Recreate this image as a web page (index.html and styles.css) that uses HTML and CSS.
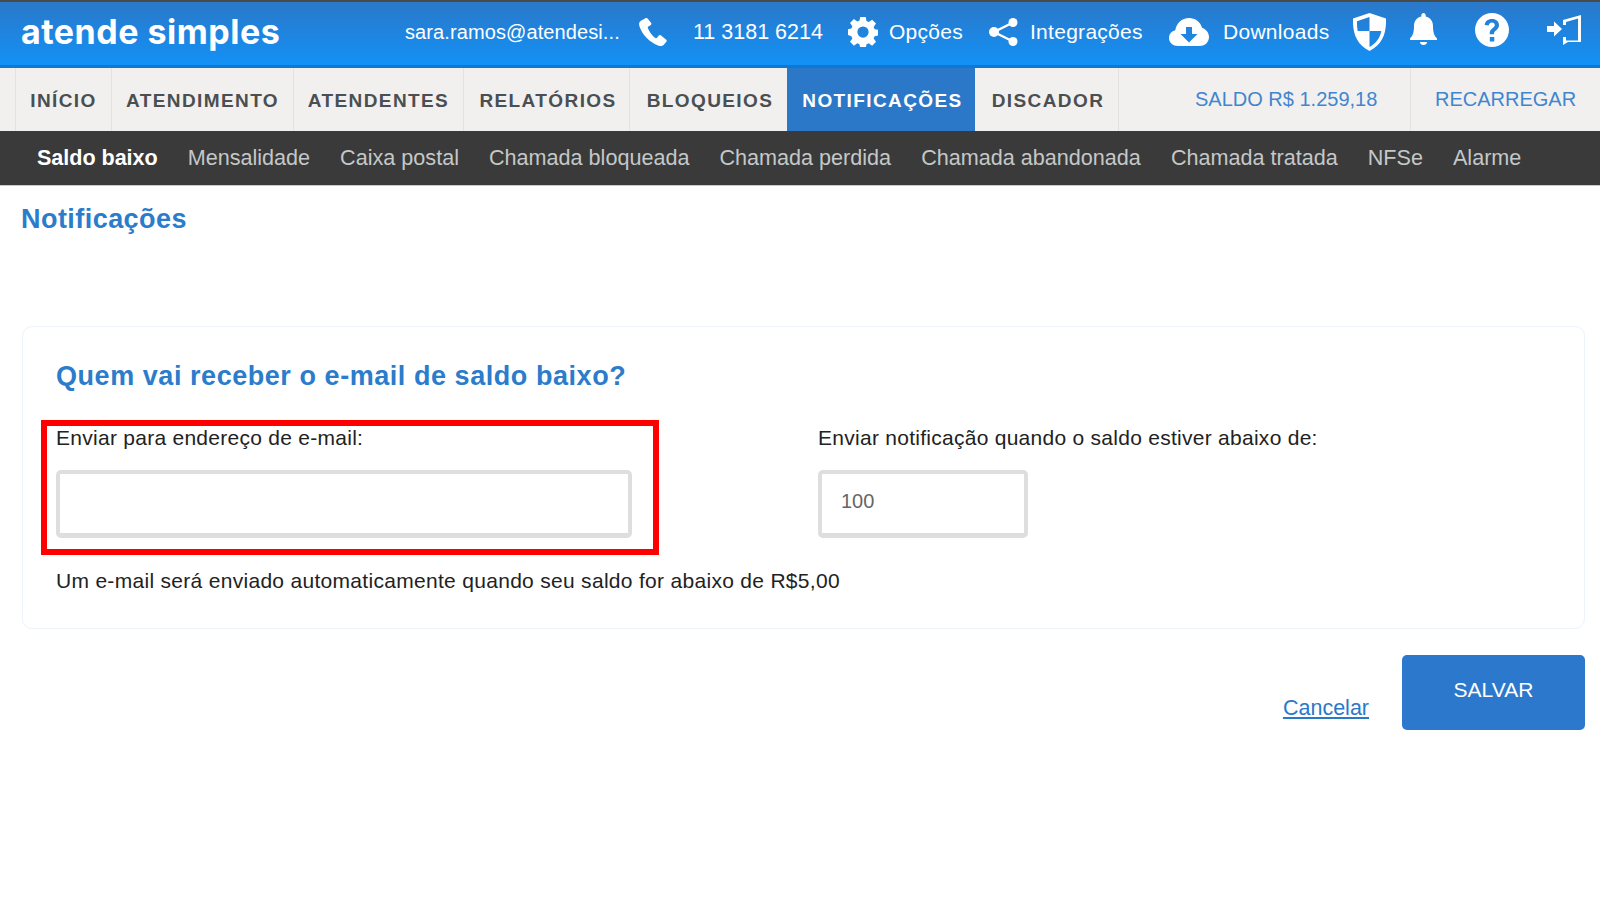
FILE: index.html
```html
<!DOCTYPE html>
<html lang="pt-BR">
<head>
<meta charset="utf-8">
<title>Notificações</title>
<link rel="stylesheet" href="styles.css">
</head>
<body>
<header class="topbar">
  <div class="logo">atende simples</div>
  <div class="top-items">
    <span class="email">sara.ramos@atendesi...</span>
    <svg class="ic ic-phone" viewBox="0 0 30 30"><path d="M7 1.500 2.500 4C1 5 .8 7 1.500 9.500 4 17 11 25 20 28.500c2.500 1 4.500.8 5.800-.8l2.500-3c.7-.9.500-1.700-.3-2.300l-5-4c-.8-.6-1.600-.5-2.200.2l-1.800 2.200c-.5.500-1 .6-1.600.2-3-2-6-6-7.500-9.800-.3-.7-.1-1.200.5-1.600l2.200-1.400c.8-.5 1-1.300.6-2.100L10 2c-.6-.9-1.800-1.200-3-.5z" fill="#fff"/></svg>
    <span class="phone">11 3181 6214</span>
    <svg class="ic ic-gear" viewBox="0 0 24 24"><path fill="#fff" fill-rule="evenodd" d="M9.800 0h4.400l.6 3.200 1.800.8 2.700-1.900 3.100 3.100-1.900 2.700.8 1.800 3.200.6v4.400l-3.200.6-.8 1.800 1.900 2.700-3.100 3.100-2.700-1.900-1.800.8-.6 3.200H9.800l-.6-3.200-1.800-.8-2.700 1.900-3.100-3.100 1.900-2.700-.8-1.800L-.5 14.200V9.800l3.200-.6.8-1.800-1.900-2.700 3.100-3.100 2.700 1.900 1.800-.8zM12 7.500a4.500 4.500 0 1 0 0 9 4.500 4.500 0 0 0 0-9z"/></svg>
    <span class="opcoes">Opções</span>
    <svg class="ic ic-share" viewBox="0 0 29 28"><g fill="#fff"><circle cx="24" cy="4.500" r="4.500"/><circle cx="24" cy="23.500" r="4.500"/><circle cx="5" cy="14" r="5"/></g><path d="M24 4.500 5 14l19 9.500" fill="none" stroke="#fff" stroke-width="2.400"/></svg>
    <span class="integ">Integrações</span>
    <svg class="ic ic-cloud" viewBox="0 0 40 28"><path fill="#fff" fill-rule="evenodd" d="M9 28C4 28 0 24.500 0 20c0-3.800 2.600-7 6.300-7.800C7.300 5.300 13 0 20 0c6.300 0 11.500 4 13 9.700 4 1.300 7 5 7 9.300 0 5-4 9-9 9zM17 9v7h-5.500l8.500 8.500 8.500-8.500H23V9z"/></svg>
    <span class="down">Downloads</span>
    <svg class="ic ic-shield" viewBox="0 0 33 38"><path fill="#fff" fill-rule="evenodd" d="M16.500 0 33 5.500c.5 14-3 26-16.500 32.500C3 31.500-.5 19.500 0 5.500zM16.500 4 4 8.200C3.900 11.500 4.100 15 4.700 18h11.800zm0 14v16c7-4 10.500-9.200 11.800-16z"/></svg>
    <svg class="ic ic-bell" viewBox="0 0 27 32"><path fill="#fff" d="M13.500 0c1.300 0 2.200 1 2.200 2.300v1.200C20.500 4.500 23 8.500 23 13c0 6 1 9.500 4 12.500V27H0v-1.500C3 22.500 4 19 4 13c0-4.500 2.500-8.500 7.300-9.500V2.300C11.300 1 12.200 0 13.500 0zM10 29h7c0 1.800-1.500 3-3.500 3S10 30.800 10 29z"/></svg>
    <svg class="ic ic-help" viewBox="0 0 34 34"><path fill="#fff" fill-rule="evenodd" d="M17 0a17 17 0 1 1 0 34 17 17 0 0 1 0-34zm-2.200 24v4.500h4.500V24zM17 6c-4.300 0-7 2.300-7.300 6l4 .6c.3-2 1.400-3 3.200-3 1.700 0 2.900 1 2.900 2.500 0 1.300-.8 2-2.100 3-2 1.500-3 3-3 5.400v.7h4.300v-.5c0-1.500.6-2.200 2-3.300 1.900-1.500 3-3 3-5.300C24 8.500 21.200 6 17 6z"/></svg>
    <svg class="ic ic-door" viewBox="0 0 34 30"><path fill="#fff" d="M0 11h7V6.500l8 7.500-8 7.500V17H0z"/><path fill="#fff" fill-rule="evenodd" d="M16 5 34 0v27H21l-5 3v-8h3v3.500H31V3.500L19 7v3h-3z"/></svg>
  </div>
</header>

<nav class="menu">
  <a class="menu-item">INÍCIO</a>
  <a class="menu-item">ATENDIMENTO</a>
  <a class="menu-item">ATENDENTES</a>
  <a class="menu-item">RELATÓRIOS</a>
  <a class="menu-item">BLOQUEIOS</a>
  <a class="menu-item active">NOTIFICAÇÕES</a>
  <a class="menu-item last">DISCADOR</a>
  <a class="menu-link saldo">SALDO R$ 1.259,18</a>
  <a class="menu-link recarga">RECARREGAR</a>
</nav>

<nav class="subnav">
  <a class="sub-item current">Saldo baixo</a>
  <a class="sub-item">Mensalidade</a>
  <a class="sub-item">Caixa postal</a>
  <a class="sub-item">Chamada bloqueada</a>
  <a class="sub-item">Chamada perdida</a>
  <a class="sub-item">Chamada abandonada</a>
  <a class="sub-item">Chamada tratada</a>
  <a class="sub-item">NFSe</a>
  <a class="sub-item">Alarme</a>
</nav>

<main class="content">
  <h1 class="page-title">Notificações</h1>
  <section class="card">
    <h2 class="card-title">Quem vai receber o e-mail de saldo baixo?</h2>
    <div class="fields">
      <div class="field field-email">
        <label class="label">Enviar para endereço de e-mail:</label>
        <input class="input input-email" type="text">
        <span class="highlight"></span>
      </div>
      <div class="field">
        <label class="label">Enviar notificação quando o saldo estiver abaixo de:</label>
        <input class="input input-value" type="text" value="100">
      </div>
    </div>
    <p class="hint">Um e-mail será enviado automaticamente quando seu saldo for abaixo de R$5,00</p>
  </section>
  <div class="actions">
    <a class="cancel" href="#">Cancelar</a>
    <button class="save" type="button">SALVAR</button>
  </div>
</main>
</body>
</html>
```
FILE: styles.css
```css
* { box-sizing: border-box; }
html, body { margin: 0; padding: 0; background: #fff; }
body { font-family: "Liberation Sans", Arial, sans-serif; height: 900px; overflow: hidden; color: #222; }

.topbar {
  height: 68px;
  display: flex;
  align-items: center;
  border-top: 2px solid #4a4a4a;
  border-bottom: 3px solid #0f78d2;
  background: linear-gradient(180deg, #2a78c9 0%, #1391f6 100%);
  color: #fff;
  position: relative;
}
.logo {
  font-family: Inter, "Open Sans", sans-serif;
  font-weight: 700;
  font-size: 34px;
  letter-spacing: .5px;
  margin-left: 21px;
  width: 384px;
  flex: none;
  margin-top: -5px;
}
.top-items { display: flex; align-items: center; font-size: 21px; letter-spacing: .28px; height: 100%; margin-top: -3px; }
.top-items span { white-space: nowrap; }
.ic { display: block; flex: none; }
.email { font-size: 20px; letter-spacing: .1px; width: 233px; }
.ic-phone { width: 30px; height: 30px; margin-right: 25px; }
.phone { width: 155px; font-size: 21.5px; letter-spacing: 0; }
.ic-gear { width: 30px; height: 30px; margin-right: 11px; }
.opcoes { width: 100px; }
.ic-share { width: 29px; height: 28px; margin-right: 12px; }
.integ { width: 139px; }
.ic-cloud { width: 40px; height: 28px; margin-right: 14px; }
.down { width: 130px; }
.ic-shield { width: 33px; height: 38px; margin-right: 24px; }
.ic-bell { width: 27px; height: 32px; margin-right: 38px; margin-top: -6px; }
.ic-help { width: 34px; height: 34px; margin-right: 38px; margin-top: -4px; }
.ic-door { width: 34px; height: 30px; margin-top: -4px; }

.menu {
  height: 63px;
  display: flex;
  background: #f1f0ef;
  padding-left: 15px;
  font-size: 19px;
  letter-spacing: 1.4px;
  color: #4a4f52;
}
.menu-item {
  display: flex;
  align-items: center;
  justify-content: center;
  font-weight: 700;
  padding-top: 3px;
  border-left: 1px solid #e2e2e2;
}
.menu-item:nth-child(n+4) { padding-left: 3px; }
.menu-item:nth-child(1) { width: 96px; }
.menu-item:nth-child(2) { width: 182px; }
.menu-item:nth-child(3) { width: 170px; }
.menu-item:nth-child(4) { width: 166px; }
.menu-item:nth-child(5) { width: 158px; }
.menu-item.active { width: 188px; background: #2b78c8; color: #fff; border-left: 0; }
.menu-item.last { width: 144px; border-left: 0; border-right: 1px solid #e2e2e2; }
.menu-link {
  display: flex;
  align-items: center;
  color: #3f86cf;
  letter-spacing: 0;
  font-size: 20px;
  padding-bottom: 1px;
}
.saldo { width: 292px; padding-left: 76px; border-right: 1px solid #e2e2e2; }
.recarga { padding-left: 24px; }

.subnav {
  height: 55px;
  display: flex;
  align-items: center;
  gap: 30px;
  padding: 0 0 0 37px;
  background: #3a3a3a;
  border-bottom: 1px solid #c9c9c9;
  font-size: 21.6px;
  color: #c4c8c8;
}
.sub-item { white-space: nowrap; }
.sub-item.current { color: #fff; font-weight: 700; letter-spacing: -.05px; }

.content { padding: 0 15px 0 22px; }
.page-title {
  margin: 17px 0 0 -1px;
  font-size: 27px;
  line-height: 32px;
  font-weight: 700;
  letter-spacing: .45px;
  color: #2b7ccb;
}
.card {
  height: 303px;
  margin-top: 91px;
  padding: 31px 33px 0;
  border: 1px solid #edf3f8;
  border-radius: 10px;
}
.card-title {
  margin: 0;
  font-size: 27px;
  line-height: 36px;
  font-weight: 700;
  color: #2b7ccb;
  letter-spacing: .55px;
}
.fields { display: flex; margin-top: 30px; }
.field { position: relative; display: flex; flex-direction: column; align-items: flex-start; }
.field-email { width: 762px; }
.label { font-size: 21px; line-height: 28px; letter-spacing: .27px; color: #222; white-space: nowrap; }
.input {
  display: block;
  height: 68px;
  margin-top: 18px;
  padding: 0 19px 4px;
  border: 4px solid #dedede;
  border-bottom-width: 5px;
  border-radius: 5px;
  font: 20px "Liberation Sans", sans-serif;
  color: #666;
  background: #fff;
  outline: 0;
}
.input-email { width: 576px; }
.input-value { width: 210px; }
.highlight {
  position: absolute;
  left: -15px;
  top: -4px;
  width: 618px;
  height: 135px;
  border: 6px solid #fe0000;
  pointer-events: none;
}
.hint { margin: 29px 0 0; font-size: 21px; line-height: 28px; letter-spacing: .3px; color: #222; }

.actions { display: flex; justify-content: flex-end; align-items: flex-start; margin-top: 26px; }
.cancel { margin: 39px 33px 0 0; font-size: 21.5px; line-height: 28px; color: #2b78c8; }
.save {
  width: 183px;
  height: 75px;
  border: 0;
  border-radius: 5px;
  background: #2b78cc;
  color: #fff;
  font: 21px "Liberation Sans", sans-serif;
  padding-bottom: 6px;
}
```
